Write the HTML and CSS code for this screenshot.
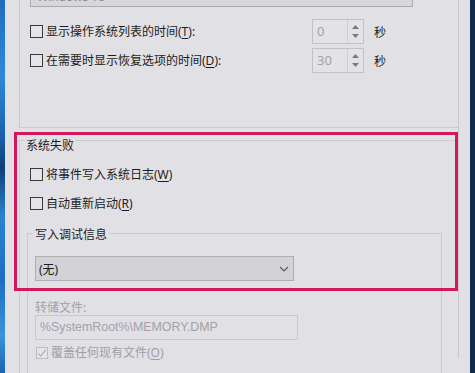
FILE: index.html
```html
<!DOCTYPE html>
<html lang="zh-CN">
<head>
  <meta charset="UTF-8">
  <title>启动和故障恢复</title>
  <link rel="stylesheet" href="styles.css">
</head>
<body>
  <div class="desk desk-left"></div>

  <div class="window">
    <div class="page">

      <!-- 系统启动 -->
      <section class="group boot">
        <div class="os-select">Windows 10</div>

        <div class="opt-row">
          <label class="check"><span class="box"></span><span>显示操作系统列表的时间(<u>T</u>):</span></label>
          <div class="spin">
            <span class="spin-val">0</span>
            <span class="spin-btns">
              <svg width="7" height="4" viewBox="0 0 7 4"><polygon points="0,4 3.5,0 7,4" /></svg>
              <svg width="7" height="4" viewBox="0 0 7 4"><polygon points="0,0 3.5,4 7,0" /></svg>
            </span>
          </div>
          <span class="unit">秒</span>
        </div>

        <div class="opt-row">
          <label class="check"><span class="box"></span><span>在需要时显示恢复选项的时间(<u>D</u>):</span></label>
          <div class="spin">
            <span class="spin-val">30</span>
            <span class="spin-btns">
              <svg width="7" height="4" viewBox="0 0 7 4"><polygon points="0,4 3.5,0 7,4" /></svg>
              <svg width="7" height="4" viewBox="0 0 7 4"><polygon points="0,0 3.5,4 7,0" /></svg>
            </span>
          </div>
          <span class="unit">秒</span>
        </div>
      </section>

      <!-- 系统失败 -->
      <section class="group failure">
        <div class="legend">系统失败</div>

        <div class="fail-row">
          <label class="check"><span class="box"></span><span>将事件写入系统日志(<u>W</u>)</span></label>
        </div>
        <div class="fail-row">
          <label class="check"><span class="box"></span><span>自动重新启动(<u>R</u>)</span></label>
        </div>

        <div class="subgroup">
          <div class="sub-legend">写入调试信息</div>

          <div class="combo">
            <span>(无)</span>
            <svg width="10" height="6" viewBox="0 0 10 6"><polyline points="1,1 5,5 9,1" /></svg>
          </div>

          <div class="field-label">转储文件:</div>
          <div class="textbox">%SystemRoot%\MEMORY.DMP</div>

          <label class="check disabled">
            <span class="box">
              <svg width="11" height="11" viewBox="0 0 11 11"><polyline points="1.5,5.5 4,8.5 9.5,1.5" /></svg>
            </span>
            <span>覆盖任何现有文件(<u>O</u>)</span>
          </label>
        </div>
      </section>

    </div>

    <!-- red highlight drawn over the dialog -->
    <div class="highlight"></div>
  </div>

  <div class="desk desk-right"></div>
</body>
</html>
```

FILE: styles.css
```css
* {
  box-sizing: border-box;
}

body {
  margin: 0;
  display: flex;
  height: 373px;
  overflow: hidden;
  font-family: "Noto Sans", "Noto Sans CJK SC", sans-serif;
  font-size: 12px;
  color: #1d1d20;
  background-color: #e1e0e4;
}

u {
  text-decoration-thickness: 1px;
  text-underline-offset: 2px;
}

/* desktop edges */
.desk {
  flex: none;
  width: 5px;
}

.desk-left {
  background: linear-gradient(to bottom, #1d6cbf 0%, #2f8ad9 20%, #1a65b5 35%, #0f3f78 45%, #2a82d2 58%, #1c6ec2 75%, #3a93de 90%, #1a63b2 100%);
}

.desk-right {
  background-color: #0e2b4e;
}

.window {
  position: relative;
  flex: none;
  width: 465px;
  background-color: #e1e0e4;
}

.page {
  width: 454px;
  height: 100%;
  padding-left: 14px;
  border-right: 1px solid #c9c8cd;
}

.group {
  border-left: 1px solid #cbcacf;
}

/* 系统启动 */
.boot {
  padding-bottom: 54px;
  border-bottom: 1px solid #cbcacf;
}

.os-select {
  width: 383px;
  height: 22px;
  margin: -15px 0 0 10px;
  padding: 1px 0 0 6px;
  line-height: 20px;
  color: #8a8a8e;
  background-color: #d7d6da;
  border: 1px solid #acabb0;
  overflow: hidden;
}

.opt-row {
  display: grid;
  grid-template-columns: 282px 52px auto;
  align-items: center;
  height: 25px;
  margin-top: 4px;
  padding-left: 10px;
}

.os-select + .opt-row {
  margin-top: 12px;
}

.check {
  display: flex;
  align-items: center;
  gap: 3px;
  line-height: 16px;
  white-space: nowrap;
}

.box {
  display: flex;
  align-items: center;
  justify-content: center;
  flex: none;
  width: 13px;
  height: 13px;
  border: 1px solid #3a3a3d;
  background-color: #e5e4e8;
}

.spin {
  display: flex;
  height: 25px;
  border: 1px solid #c2c1c6;
  background-color: #e3e2e6;
}

.spin-val {
  flex: 1;
  padding-left: 4px;
  line-height: 23px;
  font-size: 13px;
  color: #a2a2a6;
}

.spin-btns {
  display: flex;
  flex-direction: column;
  justify-content: space-around;
  align-items: center;
  width: 16px;
  padding: 3px 0;
  border-left: 1px solid #cfced3;
}

.spin-btns svg {
  fill: #7a7a7e;
}

.unit {
  margin-left: 10px;
}

/* 系统失败 */
.failure {
  height: 240px;
  margin-top: 12px;
}

.legend {
  display: flex;
  align-items: flex-start;
  gap: 2px;
  line-height: 12px;
}

.legend::before,
.legend::after {
  content: "";
  border-top: 1px solid #cbcacf;
}

.legend::before {
  width: 4px;
}

.legend::after {
  flex: 1;
}

.fail-row {
  display: flex;
  align-items: center;
  height: 25px;
  margin-top: 4px;
  padding-left: 10px;
}

.legend + .fail-row {
  margin-top: 10px;
}

.subgroup {
  width: 415px;
  height: 160px;
  margin: 17px 0 0 7px;
  padding-left: 7px;
  border: 1px solid #cbcacf;
  border-bottom: none;
}

.sub-legend {
  width: fit-content;
  margin: -7px 0 0 -2px;
  padding: 0 2px;
  line-height: 16px;
  background-color: #e1e0e4;
}

.combo {
  display: flex;
  align-items: center;
  justify-content: space-between;
  width: 259px;
  height: 25px;
  margin-top: 13px;
  padding: 0 4px 0 3px;
  background-color: #d3d2d6;
  border: 1px solid #aeadb2;
}

.combo svg {
  fill: none;
  stroke: #5a5a5e;
  stroke-width: 1.2;
}

.field-label {
  margin-top: 20px;
  line-height: 14px;
  color: #a2a1a6;
}

.textbox {
  width: 263px;
  height: 25px;
  padding-left: 4px;
  line-height: 23px;
  font-family: "Liberation Sans", sans-serif;
  font-size: 12.4px;
  color: #a3a2a7;
  border: 1px solid #c9c8cd;
}

.check.disabled {
  height: 26px;
  margin-left: 1px;
  color: #a09fa4;
}

.check.disabled .box {
  width: 12px;
  height: 12px;
  border-color: #bdbcc1;
}

.check.disabled svg {
  fill: none;
  stroke: #a9a8ad;
  stroke-width: 1.2;
}

/* annotation box */
.highlight {
  position: absolute;
  left: 9px;
  top: 132px;
  width: 444px;
  height: 159px;
  border: 3px solid #d0185a;
}
```
